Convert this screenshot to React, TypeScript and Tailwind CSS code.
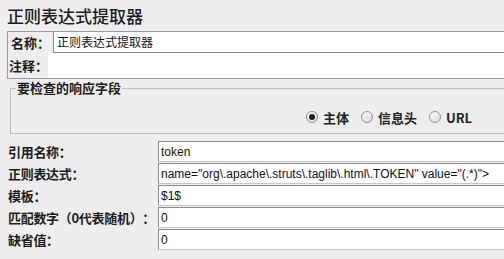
const FONT = '"Noto Sans CJK SC", "Liberation Sans", sans-serif';
const MONO = '"Liberation Sans", "Noto Sans CJK SC", sans-serif';

function Radio({ checked, label }: { checked?: boolean; label: string }) {
  return (
    <label className="flex items-center gap-[5px]">
      <span className="flex h-[12px] w-[12px] items-center justify-center rounded-full border border-[#8e8f8f] bg-gradient-to-br from-white to-[#d4d6d8]">
        {checked && <span className="h-[6px] w-[6px] rounded-full bg-[#1e1e1e]" />}
      </span>
      <span className="text-[13px] font-bold leading-none text-[#222]">{label}</span>
    </label>
  );
}

function FieldRow({ label, value }: { label: string; value: string }) {
  return (
    <div className="mb-[1px] flex h-[21px] items-stretch">
      <div className="flex w-[158px] shrink-0 items-center pl-[8px] text-[13px] font-bold tracking-[-0.3px] whitespace-nowrap text-[#1c1c1c]">
        {label}
      </div>
      <div
        className="flex flex-1 items-center border-t border-l border-b border-t-[#8a8a8a] border-l-[#8a8a8a] border-b-[#c6c6c6] bg-white pl-[2px] text-[12px] whitespace-nowrap text-[#111]"
        style={{ fontFamily: MONO }}
      >
        {value}
      </div>
    </div>
  );
}

export default function App() {
  return (
    <div
      className="h-[259px] w-[504px] overflow-hidden bg-[#eeeeee] [text-spacing-trim:space-all]"
      style={{ fontFamily: FONT }}
    >
      <div className="flex h-[30px] items-center pl-[7px] pt-[1px] text-[17px] font-medium text-[#1c1c1c]">
        正则表达式提取器
      </div>

      <div className="mt-[1px] ml-[7px] border-t border-l border-b border-[#9c9c9c]">
        <div className="flex h-[21px] items-stretch">
          <div className="flex w-[45px] items-center pl-[3px] text-[13px] font-bold whitespace-nowrap text-[#1c1c1c]">名称：</div>
          <div className="flex flex-1 items-center border-l border-b border-l-[#8a8a8a] border-b-[#8a8a8a] bg-white pl-[3px] text-[12px] text-[#111]">
            正则表达式提取器
          </div>
        </div>
        <div className="flex h-[25px] items-stretch">
          <div className="flex w-[40px] items-center pl-[1px] text-[13px] font-bold whitespace-nowrap text-[#1c1c1c]">注释：</div>
          <div className="flex-1 bg-white" />
        </div>
      </div>

      <div className="relative mt-[9px] ml-[10px] h-[46px] border-t border-l border-b border-[#bcbcbc]">
        <span className="absolute top-[-9px] left-[5px] bg-[#eeeeee] px-[1px] text-[13px] leading-[16px] font-bold text-[#1c1c1c]">
          要检查的响应字段
        </span>
        <div className="flex h-full items-center gap-[12px] pt-[12px] pl-[295px]">
          <Radio checked label="主体" />
          <Radio label="信息头" />
          <Radio label="URL" />
        </div>
      </div>

      <div className="mt-[7px]">
        <FieldRow label="引用名称：" value="token" />
        <FieldRow
          label="正则表达式："
          value={'name="org\\.apache\\.struts\\.taglib\\.html\\.TOKEN" value="(.*)">'}
        />
        <FieldRow label="模板：" value="$1$" />
        <FieldRow label="匹配数字（0代表随机）：" value="0" />
        <FieldRow label="缺省值：" value="0" />
      </div>
    </div>
  );
}
